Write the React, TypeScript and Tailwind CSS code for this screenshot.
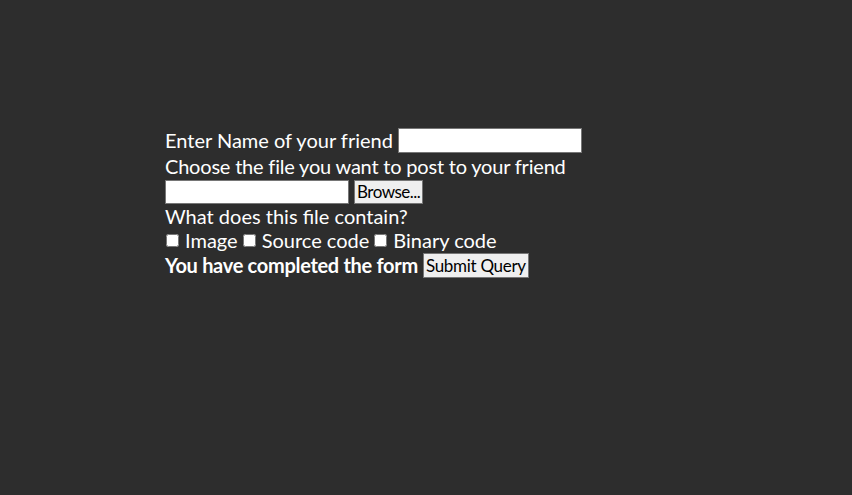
export default function App() {
  return (
    <div className="min-h-[495px] w-full bg-[#2d2d2d] pt-[127px] pl-[165px] text-white font-['Lato',sans-serif] text-[20px] leading-[25px]">
      <form onSubmit={(e) => e.preventDefault()}>
        <div className="flex items-center h-[26px]">
          <span>Enter Name of your friend</span>
          <input
            type="text"
            className="ml-[5px] w-[184px] h-[25px] bg-white border border-[#767676] text-black"
          />
        </div>
        <div className="h-[26px] flex items-center tracking-[-0.2px]">
          Choose the file you want to post to your friend
        </div>
        <div className="flex items-center h-[25px]">
          <div className="w-[184px] h-[24px] bg-white border border-[#767676]" />
          <button
            type="button"
            className="ml-[5px] h-[24px] px-[2px] bg-[#efefef] border border-[#767676] text-black text-[17px] leading-[20px] tracking-[-0.5px]"
          >
            Browse...
          </button>
        </div>
        <div className="h-[24px] flex items-center">What does this file contain?</div>
        <div className="flex items-center h-[25px]">
          <input type="checkbox" className="w-[13px] h-[13px] ml-[1px] mr-[6px]" />
          <span>Image</span>
          <input type="checkbox" className="w-[13px] h-[13px] ml-[5px] mr-[6px]" />
          <span>Source code</span>
          <input type="checkbox" className="w-[13px] h-[13px] ml-[5px] mr-[6px]" />
          <span>Binary code</span>
        </div>
        <div className="flex items-center h-[25px]">
          <span className="font-bold tracking-[-0.3px]">You have completed the form</span>
          <button
            type="submit"
            className="ml-[5px] h-[25px] px-[2px] bg-[#efefef] border border-[#767676] text-black text-[17px] leading-[20px] tracking-[-0.3px]"
          >
            Submit Query
          </button>
        </div>
      </form>
    </div>
  );
}
